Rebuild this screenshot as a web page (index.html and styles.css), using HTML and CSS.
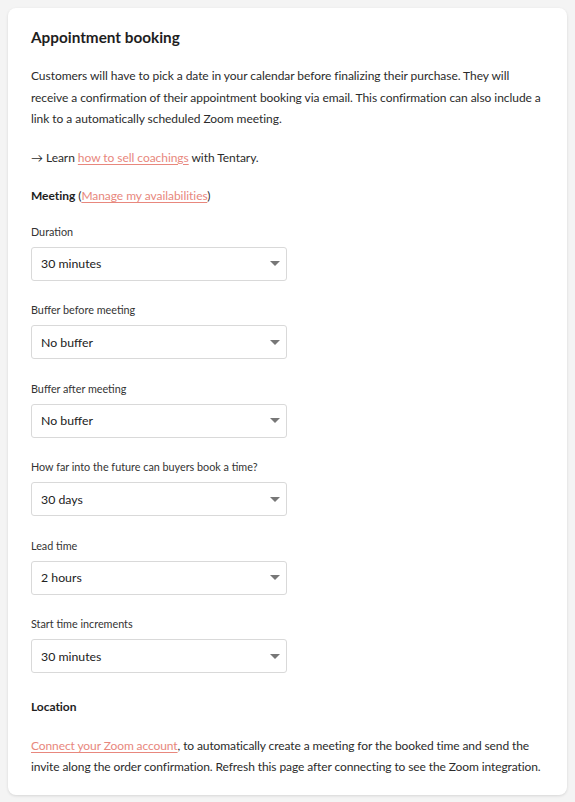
FILE: index.html
```html
<!DOCTYPE html>
<html lang="en">
<head>
<meta charset="utf-8">
<link rel="stylesheet" href="styles.css">
</head>
<body>
<div class="card">
  <h2 class="title">Appointment booking</h2>
  <p class="text">Customers will have to pick a date in your calendar before finalizing their purchase. They will receive a confirmation of their appointment booking via email. This confirmation can also include a link to a automatically scheduled Zoom meeting.</p>
  <p class="text">→ Learn <a class="link" href="#">how to sell coachings</a> with Tentary.</p>
  <p class="text"><strong class="strong">Meeting</strong> (<a class="link" href="#">Manage my availabilities</a>)</p>

  <div class="fields">
    <div class="field">
      <div class="label">Duration</div>
      <div class="select"><span>30 minutes</span><svg class="arrow" width="10" height="5" viewBox="0 0 10 5"><path d="M0 0H10L5 5Z"/></svg></div>
    </div>
    <div class="field">
      <div class="label">Buffer before meeting</div>
      <div class="select"><span>No buffer</span><svg class="arrow" width="10" height="5" viewBox="0 0 10 5"><path d="M0 0H10L5 5Z"/></svg></div>
    </div>
    <div class="field">
      <div class="label">Buffer after meeting</div>
      <div class="select"><span>No buffer</span><svg class="arrow" width="10" height="5" viewBox="0 0 10 5"><path d="M0 0H10L5 5Z"/></svg></div>
    </div>
    <div class="field">
      <div class="label">How far into the future can buyers book a time?</div>
      <div class="select"><span>30 days</span><svg class="arrow" width="10" height="5" viewBox="0 0 10 5"><path d="M0 0H10L5 5Z"/></svg></div>
    </div>
    <div class="field">
      <div class="label">Lead time</div>
      <div class="select"><span>2 hours</span><svg class="arrow" width="10" height="5" viewBox="0 0 10 5"><path d="M0 0H10L5 5Z"/></svg></div>
    </div>
    <div class="field">
      <div class="label">Start time increments</div>
      <div class="select"><span>30 minutes</span><svg class="arrow" width="10" height="5" viewBox="0 0 10 5"><path d="M0 0H10L5 5Z"/></svg></div>
    </div>
  </div>

  <p class="text heading"><strong class="strong">Location</strong></p>
  <p class="text tight"><a class="link" href="#">Connect your Zoom account</a>, to automatically create a meeting for the booked time and send the invite along the order confirmation. Refresh this page after connecting to see the Zoom integration.</p>
</div>
</body>
</html>
```
FILE: styles.css
```css
html, body {
  margin: 0;
  padding: 0;
}
body {
  background: #f4f4f4;
  padding: 8px;
  font-family: "Lato", "Open Sans", sans-serif;
  color: #2b2b2b;
}
.card {
  background: #ffffff;
  border-radius: 8px;
  box-shadow: 0 1px 3px rgba(0, 0, 0, 0.12);
  padding: 19px 23px 17px 23px;
  width: 559px;
  box-sizing: border-box;
}
.title {
  margin: 0;
  font-size: 15.3px;
  line-height: 20px;
  font-weight: 700;
  color: #1e1e1e;
}
.text {
  margin: 17px 0 0 0;
  font-size: 12px;
  letter-spacing: -0.05px;
  line-height: 21.5px;
}
.title + .text {
  margin-top: 18px;
}
.tight {
  letter-spacing: -0.1px;
}
.strong {
  font-weight: 700;
  color: #1e1e1e;
}
.link {
  color: #e8877d;
  text-decoration: underline;
  text-decoration-thickness: 1px;
  text-underline-offset: 2px;
}
.fields {
  margin-top: 17px;
  display: flex;
  flex-direction: column;
  gap: 21.6px;
}
.field {
  display: flex;
  flex-direction: column;
  gap: 7px;
}
.label {
  font-size: 10.8px;
  line-height: 16px;
  color: #333;
}
.select {
  width: 256px;
  height: 34px;
  box-sizing: border-box;
  border: 1px solid #d9d9d9;
  border-radius: 3px;
  padding: 0 6px 0 9px;
  display: flex;
  align-items: center;
  justify-content: space-between;
  font-size: 12.3px;
  color: #222;
}
.arrow {
  fill: #777;
}
.heading {
  margin-top: 23px;
}
```
